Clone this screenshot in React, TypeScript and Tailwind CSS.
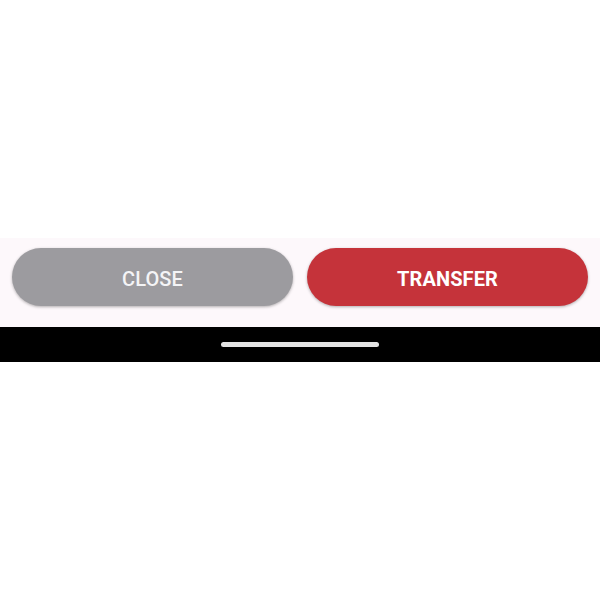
import React from "react";

export default function App() {
  return (
    <div className="flex h-[600px] w-[600px] flex-col bg-white font-['Roboto',sans-serif]">
      <div className="h-[238px] shrink-0" />

      {/* Bottom action panel */}
      <div className="flex h-[89px] shrink-0 gap-[14px] bg-[#fdf8fb] px-3 pt-[10px]">
        <button className="h-[58px] flex-1 rounded-full bg-[#9c9b9f] pt-[3px] text-[20px] font-medium tracking-[0.1px] text-[#f4f4f6] shadow-[0_1px_3px_rgba(0,0,0,0.3)]">
          CLOSE
        </button>
        <button className="h-[58px] flex-1 rounded-full bg-[#c5333a] pt-[3px] text-[20px] font-bold tracking-[0.1px] text-white shadow-[0_1px_3px_rgba(0,0,0,0.3)]">
          TRANSFER
        </button>
      </div>

      {/* System nav bar */}
      <div className="flex h-[35px] shrink-0 justify-center bg-black pt-[15px]">
        <div className="h-[5px] w-[158px] rounded-full bg-[#e4e4e4]" />
      </div>

      <div className="flex-1" />
    </div>
  );
}
